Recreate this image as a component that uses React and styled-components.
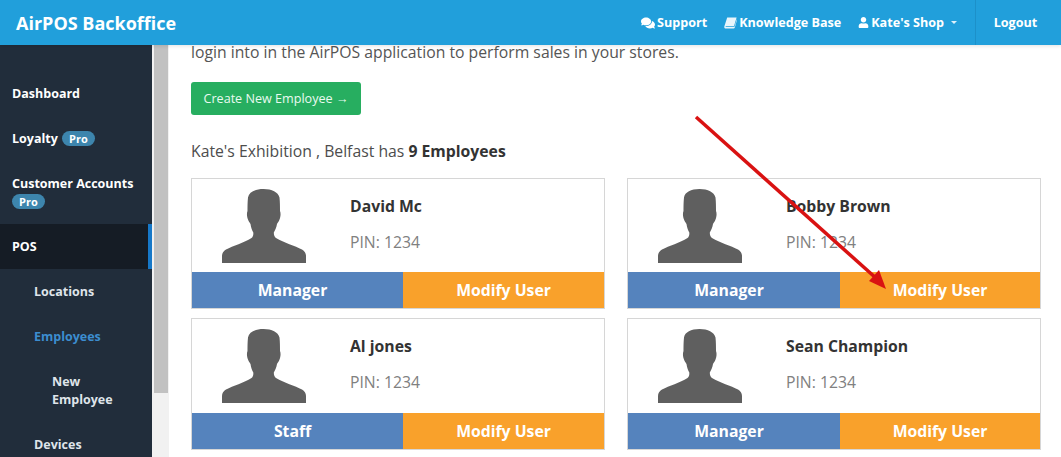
import React from "react";
import styled, { createGlobalStyle } from "styled-components";
import { FaComments, FaUser } from "react-icons/fa";

const Global = createGlobalStyle`
  html, body { margin: 0; padding: 0; height: 457px; overflow: hidden; background: #fff; }
  body { font-family: "Open Sans", "Liberation Sans", sans-serif; }
  * { box-sizing: border-box; }
`;

const Page = styled.div`
  position: relative;
  width: 1061px;
  height: 457px;
  overflow: hidden;
  display: flex;
  flex-direction: column;
`;

const Header = styled.header`
  height: 45px;
  flex: none;
  background: #219fdb;
  color: #fff;
  display: flex;
  align-items: center;
  position: relative;
  z-index: 2;
  box-shadow: 0 1px 4px rgba(0, 0, 0, 0.12);
`;

const Brand = styled.div`
  font-size: 18px;
  font-weight: 700;
  padding-left: 16px;
  margin-right: auto;
`;

const NavLink = styled.div`
  display: flex;
  align-items: center;
  gap: 2px;
  font-size: 12.6px;
  font-weight: 700;
  margin-left: 17px;
  svg { display: block; }
`;

const Caret = styled.span`
  width: 0;
  height: 0;
  margin-left: 5px;
  border-left: 3px solid transparent;
  border-right: 3px solid transparent;
  border-top: 3px solid #dff1fb;
`;

const Logout = styled.div`
  height: 45px;
  width: 86px;
  margin-left: 18px;
  padding-right: 6px;
  border-left: 1px solid #1c90c9;
  display: flex;
  align-items: center;
  justify-content: center;
  font-size: 12.6px;
  font-weight: 700;
`;

const Body = styled.div`
  flex: 1;
  display: flex;
  min-height: 0;
`;

const Sidebar = styled.nav`
  width: 152px;
  flex: none;
  background: #212d3b;
  padding-top: 26px;
  overflow: hidden;
`;

const Item = styled.div`
  padding: 13.5px 4px 13.5px ${(p) => (p.$level === 2 ? 52 : p.$level === 1 ? 34 : 12)}px;
  font-size: 12.5px;
  line-height: 18px;
  font-weight: 700;
  color: ${(p) => (p.$blue ? "#3c8dd0" : p.$level ? "#dfe4ea" : "#fff")};
  background: ${(p) => (p.$active ? "#151c25" : "transparent")};
  border-right: 4px solid ${(p) => (p.$active ? "#1678c8" : "transparent")};
`;

const Pro = styled.span`
  display: ${(p) => (p.$block ? "table" : "inline-block")};
  margin: ${(p) => (p.$block ? "1px 0 2px" : "0 0 0 1px")};
  padding: 0 7px;
  height: 15px;
  line-height: 15px;
  border-radius: 8px;
  background: #3d85ad;
  color: #fff;
  font-size: 11px;
  font-weight: 700;
  vertical-align: 0;
`;

const Track = styled.div`
  width: 17px;
  flex: none;
  background: #f1f1f1;
  padding: 0 1px 0 2px;
`;

const Thumb = styled.div`
  height: 348px;
  background: #c1c1c1;
`;

const Main = styled.main`
  flex: 1;
  min-width: 0;
  padding: 0 20px 0 22px;
`;

const Intro = styled.p`
  margin: 0;
  font-size: 15.75px;
  line-height: 14px;
  color: #555;
`;

const CreateButton = styled.div`
  display: flex;
  align-items: center;
  justify-content: center;
  margin-top: 23px;
  padding-bottom: 1px;
  width: 170px;
  height: 33px;
  border-radius: 3px;
  background: #27ae60;
  color: #eafaf0;
  font-size: 12.6px;
`;

const Count = styled.div`
  margin-top: 25px;
  height: 22px;
  line-height: 22px;
  font-size: 15.75px;
  color: #4d4d4d;
  b { font-weight: 700; color: #333; }
`;

const Grid = styled.div`
  margin-top: 16px;
  display: grid;
  grid-template-columns: 414px 414px;
  column-gap: 22px;
  row-gap: 9px;
`;

const Card = styled.article`
  height: 131px;
  border: 1px solid #d6d6d6;
  display: flex;
  flex-direction: column;
  &:nth-child(n + 3) { height: 132px; }
`;

const CardTop = styled.div`
  flex: 1;
  display: flex;
  min-height: 0;
`;

const Avatar = styled.svg`
  width: 84px;
  height: 74px;
  margin: 10px 0 0 30px;
  flex: none;
`;

const Info = styled.div`
  margin-left: 44px;
  padding-top: 16px;
`;

const Name = styled.div`
  font-size: 15.75px;
  line-height: 22px;
  font-weight: 700;
  color: #333;
`;

const Pin = styled.div`
  margin-top: 14px;
  font-size: 15.75px;
  line-height: 22px;
  color: #808080;
`;

const Actions = styled.div`
  display: grid;
  grid-template-columns: ${(p) => p.$split}px 1fr;
  height: 36px;
  flex: none;
`;

const Action = styled.div`
  display: flex;
  align-items: center;
  justify-content: center;
  padding-right: ${(p) => (p.$modify ? 0 : 10)}px;
  background: ${(p) => (p.$modify ? "#f9a12b" : "#5583bd")};
  color: #fff;
  font-size: 15.75px;
  font-weight: 700;
`;

const ArrowOverlay = styled.svg`
  position: absolute;
  left: 0;
  top: 0;
  width: 1061px;
  height: 457px;
  z-index: 1;
  pointer-events: none;
`;

const BookIcon = () => (
  <svg width="13" height="12" viewBox="0 0 13 12">
    <path d="M3.2 0.5H12.6L10 9.2H2.2C1.6 9.2 1.4 9.9 1.9 10.1H9.6C10.1 10.1 10.4 9.9 10.6 9.4L12.8 2.3 13 3 10.8 10.4C10.6 11.1 10.1 11.5 9.500 11.5H1.800C0.700 11.5 0 10.600 0.300 9.400Z" fill="#e9f5fb" />
  </svg>
);

const people = [
  ["David Mc", "Manager", 211],
  ["Bobby Brown", "Manager", 212],
  ["Al jones", "Staff", 211],
  ["Sean Champion", "Manager", 212],
];

const Silhouette = () => (
  <Avatar viewBox="0 0 84 74">
    <path
      fill="#5f5f5f"
      d="M41.500 0C33 0 27 3 26 8.500C25.500 13 25.500 18 25.500 22C24.500 24.500 25 28 25.800 30C26.500 32 27.500 33.500 28.500 35C29 38.500 30 41.500 31.300 43.500C31.500 46 31 47.800 29.500 49C22 53.500 11 57 4 60.500C1.500 62 0 64 0 67V74H84V67C84 64 82.500 62 80 60.500C73 57 62 53.500 54 49C52.500 47.800 51.800 46 51.800 43.500C53 41.500 54.500 38.500 55 35C56 33.500 57 32 57.700 30C58.500 28 59 24.500 58 22C58 18 58 13 57.500 8.500C56 3 50 0 41.500 0Z"
    />
  </Avatar>
);

export default function App() {
  return (
    <Page>
      <Global />
      <Header>
        <Brand>AirPOS Backoffice</Brand>
        <NavLink><FaComments size={14} /> Support</NavLink>
        <NavLink><BookIcon /> Knowledge Base</NavLink>
        <NavLink><FaUser size={11} /> Kate's Shop <Caret /></NavLink>
        <Logout>Logout</Logout>
      </Header>
      <Body>
        <Sidebar>
          <Item>Dashboard</Item>
          <Item>Loyalty <Pro>Pro</Pro></Item>
          <Item>Customer Accounts<Pro $block>Pro</Pro></Item>
          <Item $active>POS</Item>
          <Item $level={1}>Locations</Item>
          <Item $level={1} $blue>Employees</Item>
          <Item $level={2}>New Employee</Item>
          <Item $level={1}>Devices</Item>
        </Sidebar>
        <Track><Thumb /></Track>
        <Main>
          <Intro>login into in the AirPOS application to perform sales in your stores.</Intro>
          <CreateButton>Create New Employee →</CreateButton>
          <Count>Kate's Exhibition , Belfast has <b>9 Employees</b></Count>
          <Grid>
            {people.map(([name, role, split]) => (
              <Card key={name}>
                <CardTop>
                  <Silhouette />
                  <Info>
                    <Name>{name}</Name>
                    <Pin>PIN: 1234</Pin>
                  </Info>
                </CardTop>
                <Actions $split={split}>
                  <Action>{role}</Action>
                  <Action $modify>Modify User</Action>
                </Actions>
              </Card>
            ))}
          </Grid>
        </Main>
      </Body>
      <ArrowOverlay viewBox="0 0 1061 457">
        <line x1="696" y1="117" x2="877" y2="279" stroke="#d91212" strokeWidth="3.500" />
        <polygon points="886,289 869,281 879,270" fill="#d91212" />
      </ArrowOverlay>
    </Page>
  );
}
